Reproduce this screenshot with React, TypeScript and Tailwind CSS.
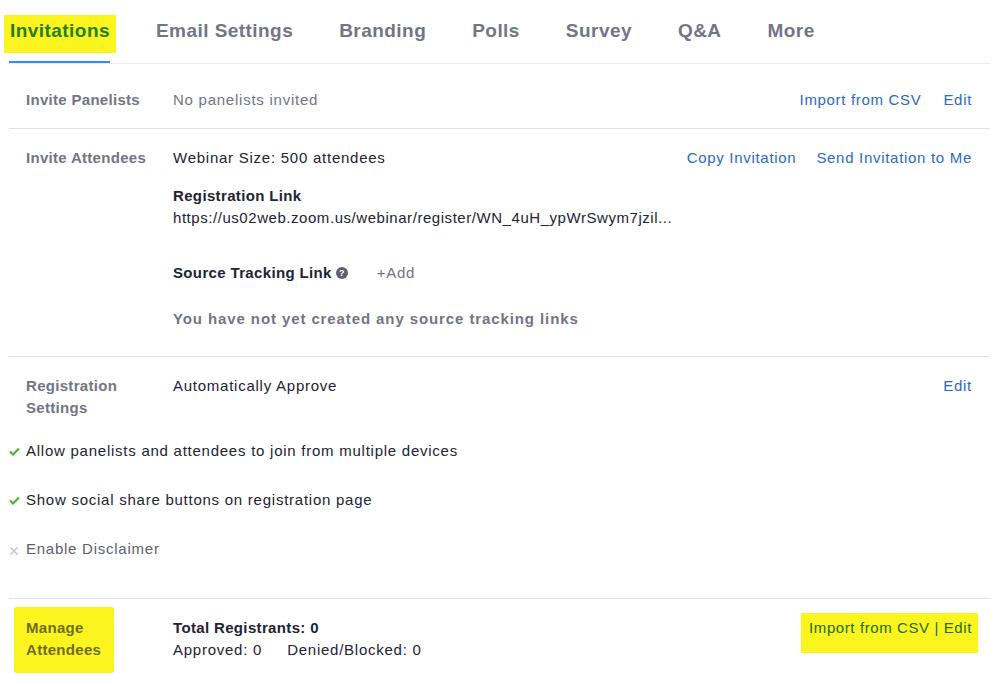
import React from "react";

const tabs = ["Invitations", "Email Settings", "Branding", "Polls", "Survey", "Q&A", "More"];

function Check() {
  return (
    <svg width="11" height="9" viewBox="0 0 11 9" className="mt-[1px]">
      <path d="M1 4.5 L4 7.5 L10 1.5" fill="none" stroke="#3fb52a" strokeWidth="2" />
    </svg>
  );
}

function Cross() {
  return (
    <svg width="10" height="10" viewBox="0 0 10 10" className="mt-[3px]">
      <path d="M1.5 1.5 L8.5 8.5 M8.5 1.5 L1.5 8.5" fill="none" stroke="#c2c2cb" strokeWidth="1.4" />
    </svg>
  );
}

export default function App() {
  return (
    <div className="w-[998px] h-[684px] bg-white overflow-hidden font-['Liberation_Sans',Arial,sans-serif] text-[15px] leading-[22px] tracking-[0.75px] text-[#232333]">
      {/* tabs */}
      <div className="mx-[9px] w-[981px] h-[64px] flex items-end gap-[45px] border-b border-[#ececf1]">
        {tabs.map((t, i) => (
          <div
            key={t}
            className={`relative h-[63px] flex items-center text-[19px] font-bold tracking-[0.45px] ${
              i === 0 ? "text-[#23801a] border-b-[2px] border-[#2d8cff]" : "text-[#747487] border-b-[2px] border-transparent"
            }`}
          >
            {i === 0 && <span className="absolute left-[-5px] right-[-6px] top-[15px] h-[38px] bg-[#fbf41f]" />}
            <span className="relative pl-[1px]">{t}</span>
          </div>
        ))}
      </div>

      <div className="mx-[9px] w-[981px]">
        {/* Invite Panelists */}
        <div className="flex pl-[17px] pr-[18px] pt-[25px] pb-[17px] border-b border-[#e0e0e6]">
          <div className="w-[147px] font-bold tracking-[0.3px] text-[#747487]">Invite Panelists</div>
          <div className="flex-1 text-[#747487]">No panelists invited</div>
          <div className="flex gap-[22px] tracking-[0.68px] text-[#2b6bc2]">
            <span>Import from CSV</span>
            <span>Edit</span>
          </div>
        </div>

        {/* Invite Attendees */}
        <div className="flex pl-[17px] pr-[18px] pt-[18px] pb-[26px] border-b border-[#e0e0e6]">
          <div className="w-[147px] font-bold tracking-[0.3px] text-[#747487]">Invite Attendees</div>
          <div className="flex-1 min-w-0">
            <div>Webinar Size: 500 attendees</div>
            <div className="mt-[16px] font-bold tracking-[0.35px]">Registration Link</div>
            <div className="whitespace-nowrap tracking-[0.55px]">https://us02web.zoom.us/webinar/register/WN_4uH_ypWrSwym7jzil...</div>
            <div className="mt-[33px] flex items-center">
              <span className="font-bold tracking-[0.35px]">Source Tracking Link</span>
              <span className="ml-[4px] w-[12px] h-[12px] rounded-full bg-[#5e5e6e] text-white text-[9px] leading-[12px] tracking-normal font-bold flex items-center justify-center">?</span>
              <span className="ml-[29px] text-[#747487]">
                <span className="font-light">+</span>Add
              </span>
            </div>
            <div className="mt-[24px] font-bold tracking-[0.9px] text-[#747487]">You have not yet created any source tracking links</div>
          </div>
          <div className="flex gap-[20px] tracking-[0.7px] text-[#2b6bc2] self-start">
            <span>Copy Invitation</span>
            <span>Send Invitation to Me</span>
          </div>
        </div>

        {/* Registration Settings */}
        <div className="pr-[18px] pt-[18px] pb-[38px] border-b border-[#e0e0e6]">
          <div className="flex pl-[17px]">
            <div className="w-[147px] font-bold tracking-[0.3px] text-[#747487]">
              Registration
              <br />
              Settings
            </div>
            <div className="flex-1">Automatically Approve</div>
            <div className="text-[#2b6bc2]">Edit</div>
          </div>
          <div className="mt-[21px] flex flex-col gap-[27px]">
            <div className="flex items-center gap-[6px]">
              <Check />
              <span>Allow panelists and attendees to join from multiple devices</span>
            </div>
            <div className="flex items-center gap-[6px]">
              <Check />
              <span>Show social share buttons on registration page</span>
            </div>
            <div className="flex items-center gap-[7px] text-[#5e5e6e]">
              <Cross />
              <span>Enable Disclaimer</span>
            </div>
          </div>
        </div>

        {/* Manage Attendees */}
        <div className="flex pl-[17px] pr-[18px] pt-[18px]">
          <div className="relative w-[147px] font-bold tracking-[0.3px] text-[#6e6e1c]">
            <span className="absolute left-[-12px] top-[-10px] w-[100px] h-[66px] bg-[#fbf41f] rounded-[3px]" />
            <span className="relative">
              Manage
              <br />
              Attendees
            </span>
          </div>
          <div className="flex-1">
            <div className="font-bold tracking-[0.35px]">Total Registrants: 0</div>
            <div className="flex gap-[25px]">
              <span>Approved: 0</span>
              <span>Denied/Blocked: 0</span>
            </div>
          </div>
          <div className="relative self-start tracking-[0.6px] text-[#246c1f]">
            <span className="absolute left-[-8px] right-[-6px] top-[-4px] h-[40px] bg-[#fbf41f]" />
            <span className="relative">Import from CSV | Edit</span>
          </div>
        </div>
      </div>
    </div>
  );
}
